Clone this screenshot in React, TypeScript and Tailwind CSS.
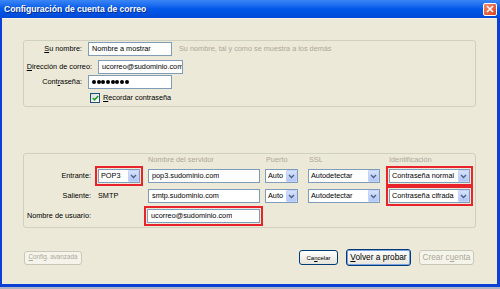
import React from "react";

function Chevron() {
  return (
    <svg width="7" height="5" viewBox="0 0 7 5">
      <path d="M1 1 L3.5 3.5 L6 1" fill="none" stroke="#4d6185" strokeWidth="1.4" />
    </svg>
  );
}

function Combo({ value, w }: { value: string; w: string }) {
  return (
    <div className={`flex items-center h-[14px] bg-white border border-[#7f9db9] ${w}`}>
      <span className="flex-1 pl-[2px] text-[7.3px] leading-none whitespace-nowrap overflow-hidden">{value}</span>
      <span className="w-[11px] h-[12px] mr-[0px] flex items-center justify-center rounded-[1px] bg-gradient-to-b from-[#d6e2fd] to-[#b3c7f5] border border-[#c3d3fd]">
        <Chevron />
      </span>
    </div>
  );
}

function Field({ value, w }: { value: string; w: string }) {
  return (
    <div className={`flex items-center h-[14px] bg-white border border-[#7f9db9] ${w}`}>
      <span className="pl-[3px] text-[7.3px] leading-none whitespace-nowrap overflow-hidden">{value}</span>
    </div>
  );
}

function Red({ children }: { children: React.ReactNode }) {
  return <div className="border-2 border-[#e8232a] p-[1px]">{children}</div>;
}

export default function App() {
  return (
    <div className="w-[500px] h-[289px] overflow-hidden bg-[#aeb4c2] font-['Liberation_Sans',Arial,sans-serif] text-black">
      <div className="h-[287px] flex flex-col bg-[#0b3fd6]">
        {/* Title bar */}
        <div className="h-[18px] flex items-center justify-between pl-[4px] pr-[3px] bg-gradient-to-b from-[#3a86f6] via-[#0058e8] to-[#0049d8]">
          <span className="text-white font-bold text-[8.6px] leading-none [text-shadow:1px_1px_0_#0a2a8a]">
            Configuración de cuenta de correo
          </span>
          <span className="w-[14px] h-[13px] flex items-center justify-center rounded-[2px] border border-white bg-gradient-to-br from-[#f0896b] to-[#d8401c]">
            <svg width="8" height="8" viewBox="0 0 8 8">
              <path d="M1 1 L7 7 M7 1 L1 7" stroke="white" strokeWidth="1.6" />
            </svg>
          </span>
        </div>

        <div className="flex-1 ml-[2px] mr-[3px] mb-[3px] bg-[#ece9d8] border-t border-[#f4f2e8] flex flex-col">
          {/* Top group */}
          <div className="mt-[21px] ml-[21px] w-[453px] h-[67px] border border-[#d0d0bf] rounded-[3px] flex flex-col pt-[1px] text-[7.3px] leading-none">
            <div className="flex items-center h-[14px]">
              <span className="w-[58px] text-right"><u>S</u>u nombre:</span>
              <div className="ml-[6px]"><Field value="Nombre a mostrar" w="w-[84px]" /></div>
              <span className="ml-[7px] text-[#aca899]">Su nombre, tal y como se muestra a los demás</span>
            </div>
            <div className="flex items-center h-[14px] mt-[4px]">
              <span className="w-[68px] text-right"><u>D</u>irección de correo:</span>
              <div className="ml-[6px]"><Field value="ucorreo@sudominio.com" w="w-[85px]" /></div>
            </div>
            <div className="flex items-center h-[14px] mt-[1px]">
              <span className="w-[58px] text-right">Cont<u>r</u>aseña:</span>
              <div className="ml-[6px] flex items-center h-[14px] w-[84px] bg-white border border-[#7f9db9] pl-[3px] gap-[0.7px]">
                {[0, 1, 2, 3, 4, 5, 6, 7].map((i) => (
                  <span key={i} className="w-[4px] h-[4px] rounded-full bg-black" />
                ))}
              </div>
            </div>
            <div className="flex items-center h-[10px] mt-[4px] ml-[66px]">
              <span className="w-[10px] h-[10px] border border-[#1c5180] bg-gradient-to-br from-[#dcdcd7] to-white flex items-center justify-center">
                <svg width="7" height="6" viewBox="0 0 7 6">
                  <path d="M0.8 3 L2.6 4.8 L6.2 1" fill="none" stroke="#21a121" strokeWidth="1.6" />
                </svg>
              </span>
              <span className="ml-[3px]"><u>R</u>ecordar contraseña</span>
            </div>
          </div>

          {/* Bottom group */}
          <div className="mt-[46px] ml-[21px] w-[453px] h-[75px] border border-[#d0d0bf] rounded-[3px] flex flex-col text-[7.3px] leading-none">
            <div className="flex items-center h-[12px] text-[#aca899]">
              <span className="w-[67px]" />
              <span className="ml-[4px] w-[48px]" />
              <span className="ml-[5px] w-[112px]">Nombre del servidor</span>
              <span className="ml-[5px] w-[33px] pl-[1px]">Puerto</span>
              <span className="ml-[10px] w-[72px] pl-[1px]">SSL</span>
              <span className="ml-[6px] w-[87px] pl-[3px]">Identificación</span>
            </div>
            <div className="flex items-center h-[20px]">
              <span className="w-[67px] text-right">Entrante:</span>
              <div className="ml-[4px] w-[48px]">
                <Red><Combo value="POP3" w="w-[42px]" /></Red>
              </div>
              <div className="ml-[5px]"><Field value="pop3.sudominio.com" w="w-[112px]" /></div>
              <div className="ml-[5px]"><Combo value="Auto" w="w-[33px]" /></div>
              <div className="ml-[10px]"><Combo value="Autodetectar" w="w-[72px]" /></div>
              <div className="ml-[6px] w-[87px]">
                <Red><Combo value="Contraseña normal" w="w-[81px]" /></Red>
              </div>
            </div>
            <div className="flex items-center h-[20px]">
              <span className="w-[67px] text-right">Saliente:</span>
              <span className="ml-[4px] w-[48px] pl-[3px]">SMTP</span>
              <div className="ml-[5px]"><Field value="smtp.sudominio.com" w="w-[112px]" /></div>
              <div className="ml-[5px]"><Combo value="Auto" w="w-[33px]" /></div>
              <div className="ml-[10px]"><Combo value="Autodetectar" w="w-[72px]" /></div>
              <div className="ml-[6px] w-[87px]">
                <Red><Combo value="Contraseña cifrada" w="w-[81px]" /></Red>
              </div>
            </div>
            <div className="flex items-center h-[20px]">
              <span className="w-[67px] text-right">Nombre de usuario:</span>
              <div className="ml-[53px]">
                <Red><Field value="ucorreo@sudominio.com" w="w-[113px]" /></Red>
              </div>
            </div>
          </div>

          {/* Buttons */}
          <div className="mt-[21px] h-[17px] flex items-center leading-none">
            <button className="ml-[22px] w-[58px] h-[14px] rounded-[3px] border border-[#c9c7ba] bg-[#f5f4ea] text-[#aca899] text-[6.3px]">
              <u>C</u>onfig. avanzada
            </button>
            <button className="ml-[217px] w-[39px] h-[15px] rounded-[3px] border border-[#003c74] bg-gradient-to-b from-white to-[#e6e4da] text-[6px]">
              Ca<u>n</u>celar
            </button>
            <button className="ml-[8px] w-[65px] h-[17px] rounded-[3px] border border-[#003c74] bg-gradient-to-b from-white to-[#e6e4da] shadow-[inset_0_0_0_1px_#7aa0e6] text-[8.3px]">
              <u>V</u>olver a probar
            </button>
            <button className="ml-[8px] w-[55px] h-[15px] rounded-[3px] border border-[#c9c7ba] bg-[#f5f4ea] text-[#aca899] text-[8.3px]">
              Crear c<u>u</u>enta
            </button>
          </div>
        </div>
      </div>
    </div>
  );
}
